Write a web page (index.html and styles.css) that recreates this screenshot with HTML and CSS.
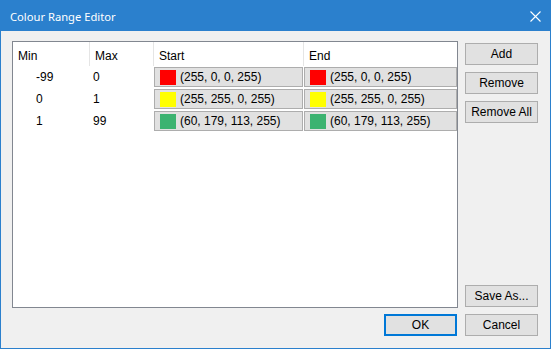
FILE: index.html
```html
<!DOCTYPE html>
<html lang="en">
<head>
  <meta charset="UTF-8" />
  <title>Colour Range Editor</title>
  <link rel="stylesheet" href="styles.css">
</head>
<body>

  <div class="window">
    <div class="titlebar">
      <span class="title">Colour Range Editor</span>
      <svg class="close" width="11" height="11" viewBox="0 0 11 11">
        <path d="M0.5 0.5 L10.5 10.5 M10.5 0.5 L0.5 10.5" stroke="#fff" stroke-width="1.1" fill="none" />
      </svg>
    </div>

    <div class="client">
      <div class="main">
        <div class="list" id="range-list">
          <div class="head">Min</div>
          <div class="head">Max</div>
          <div class="head">Start</div>
          <div class="head last">End</div>
        </div>

        <div class="side">
          <button>Add</button>
          <button>Remove</button>
          <button>Remove All</button>
          <button class="save-button">Save As...</button>
        </div>
      </div>

      <div class="footer">
        <button class="ok-button">OK</button>
        <button>Cancel</button>
      </div>
    </div>
  </div>

  <script>
    const ranges = [
      { min: -99, max: 0, colour: [255, 0, 0, 255] },
      { min: 0, max: 1, colour: [255, 255, 0, 255] },
      { min: 1, max: 99, colour: [60, 179, 113, 255] }
    ];

    function colourCell(rgba, extraClass) {
      const cell = document.createElement("div");
      cell.className = "colour-cell " + extraClass;
      const swatch = document.createElement("span");
      swatch.className = "swatch";
      swatch.style.background = `rgb(${rgba[0]}, ${rgba[1]}, ${rgba[2]})`;
      const label = document.createElement("span");
      label.textContent = `(${rgba.join(", ")})`;
      cell.appendChild(swatch);
      cell.appendChild(label);
      return cell;
    }

    function renderRanges() {
      const list = document.getElementById("range-list");
      ranges.forEach(range => {
        const min = document.createElement("div");
        min.className = "num min-cell";
        min.textContent = range.min;
        const max = document.createElement("div");
        max.className = "num max-cell";
        max.textContent = range.max;
        list.appendChild(min);
        list.appendChild(max);
        list.appendChild(colourCell(range.colour, "start-cell"));
        list.appendChild(colourCell(range.colour, "end-cell"));
      });
    }

    renderRanges();
  </script>
</body>
</html>
```

FILE: styles.css
```css
:root {
  --title-bg: #2b80cd;
  --client-bg: #f0f0f0;
  --button-bg: #e1e1e1;
  --button-border: #adadad;
  --list-border: #828790;
  --grid-line: #e5e5e5;
  --focus: #0078d7;
}

* {
  box-sizing: border-box;
}

body {
  margin: 0;
  font-family: "Liberation Sans", Arial, sans-serif;
  font-size: 12px;
  color: #000;
}

.window {
  width: 551px;
  height: 349px;
  display: flex;
  flex-direction: column;
}

.titlebar {
  height: 31px;
  flex: none;
  background: var(--title-bg);
  color: #fff;
  display: flex;
  align-items: center;
  justify-content: space-between;
  padding: 1px 10px 0 10px;
}

.title {
  font-family: "Noto Sans", sans-serif;
  font-size: 11.2px;
}

.close {
  display: block;
}

.client {
  flex: 1;
  background: var(--client-bg);
  border: 1px solid var(--title-bg);
  border-top: none;
  padding: 10px 12px 12px 11px;
  display: flex;
  flex-direction: column;
}

.main {
  flex: 1;
  display: flex;
  gap: 7px;
}

.list {
  width: 446px;
  height: 267px;
  background: #fff;
  border: 1px solid var(--list-border);
  display: grid;
  grid-template-columns: 77px 64px 150px 153px;
  grid-template-rows: 24px;
  grid-auto-rows: 22px;
  align-content: start;
}

.head {
  border-right: 1px solid var(--grid-line);
  padding: 3px 0 0 5px;
  display: flex;
  align-items: center;
}

.head.last {
  border-right: none;
}

.num {
  display: flex;
  align-items: center;
}

.min-cell {
  padding-left: 23px;
}

.max-cell {
  padding-left: 3px;
}

.colour-cell {
  background: var(--button-bg);
  border: 1px solid var(--button-border);
  display: flex;
  align-items: center;
  gap: 4px;
  padding-left: 5px;
}

.start-cell {
  margin: 1px 1px 1px 0;
}

.end-cell {
  margin: 1px 0;
}

.swatch {
  width: 16px;
  height: 15px;
  display: block;
}

.side {
  width: 73px;
  display: flex;
  flex-direction: column;
  gap: 7px;
  padding: 2px 0 1px 0;
}

button {
  width: 73px;
  height: 22px;
  margin: 0;
  padding: 0;
  background: var(--button-bg);
  border: 1px solid var(--button-border);
  border-radius: 0;
  font-family: "Liberation Sans", Arial, sans-serif;
  font-size: 12px;
  color: #000;
}

.save-button {
  margin-top: auto;
}

.footer {
  margin-top: 6px;
  display: flex;
  justify-content: flex-end;
  gap: 8px;
}

.ok-button {
  border: 2px solid var(--focus);
}
```
